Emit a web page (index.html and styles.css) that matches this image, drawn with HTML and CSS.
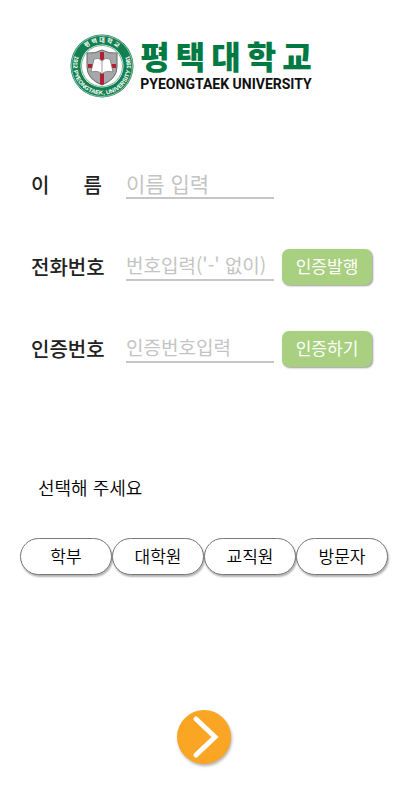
FILE: index.html
```html
<!DOCTYPE html>
<html lang="ko">

<head>
    <meta charset="utf-8">
    <meta name="viewport" content="width=device-width, initial-scale=1">
    <title>평택대학교</title>
    <link rel="stylesheet" href="styles.css">
</head>

<body>
    <header class="logo">
        <svg class="emblem" viewBox="0 0 64 64" aria-hidden="true">
            <defs>
                <path id="ring-top" d="M8 32a24 24 0 0 1 48 0" />
                <path id="ring-bottom" d="M8 16a28.800 28.800 0 1 0 48 0" />
            </defs>
            <circle cx="32" cy="32" r="31.500" fill="#128050" />
            <circle cx="32" cy="32" r="30.500" fill="none" stroke="#fff" stroke-width="0.500" />
            <circle cx="32" cy="32" r="21.500" fill="#fff" />
            <circle cx="32" cy="32" r="20.500" fill="none" stroke="#128050" stroke-width="0.600" />
            <path d="M17 19q8 1 15-3q7 4 15 3v14q0 12-15 18q-15-6-15-18z" fill="#a5a7a8" stroke="#666" stroke-width="1" />
            <path d="M30 18h4v12h12v4H34v16l-2 1l-2-1V34H18v-4h12z" fill="#ae2135" />
            <path d="M24 25q5-2 8 2q3-4 8-2l3 13q-7-2-11 2q-4-4-11-2z" fill="#fff" stroke="#777" stroke-width="0.800" />
            <path d="M32 27v13" stroke="#888" stroke-width="0.800" />
            <text class="ring-ko" text-anchor="middle"><textPath href="#ring-top" startOffset="50%">평 택 대 학 교</textPath></text>
            <text class="ring-en" text-anchor="middle"><textPath href="#ring-bottom" startOffset="50%">1912 PYEONGTAEK, UNIVERSITY 1981</textPath></text>
        </svg>
        <div class="logo-text">
            <div class="logo-ko"><span>평</span><span>택</span><span>대</span><span>학</span><span>교</span></div>
            <div class="logo-en">PYEONGTAEK UNIVERSITY</div>
        </div>
    </header>

    <form class="visit-form">
        <div class="form-group">
            <label for="name" class="spread"><span>이</span><span>름</span></label>
            <input type="text" id="name" class="name" placeholder="이름 입력">
        </div>
        <div class="form-group">
            <label for="phone">전화번호</label>
            <input type="tel" id="phone" placeholder="번호입력('-' 없이)">
            <button type="button" class="auth-btn">인증발행</button>
        </div>
        <div class="form-group">
            <label for="code">인증번호</label>
            <input type="text" id="code" placeholder="인증번호입력">
            <button type="button" class="auth-btn">인증하기</button>
        </div>

        <p class="select-text">선택해 주세요</p>
        <div class="types">
            <button type="button">학부</button>
            <button type="button">대학원</button>
            <button type="button">교직원</button>
            <button type="button">방문자</button>
        </div>

        <button type="submit" class="next-btn" aria-label="다음">
            <svg viewBox="0 0 54 54">
                <path d="M19 9l19 18l-19 18" fill="none" stroke="#fff" stroke-width="5" stroke-linecap="round" />
            </svg>
        </button>
    </form>
</body>

</html>
```
FILE: styles.css
```css
* {
    box-sizing: border-box;
}

body {
    margin: 0;
    background-color: #fff;
    color: #222;
    font-family: "Noto Sans CJK KR", "Noto Sans", sans-serif;
}

button,
input {
    font-family: inherit;
}

.logo {
    display: flex;
    justify-content: center;
    align-items: center;
    gap: 6px;
    padding-top: 34px;
    padding-right: 26px;
}

.emblem {
    width: 64px;
    height: 64px;
}

.ring-ko {
    fill: #fff;
    font-size: 6px;
    font-weight: 700;
}

.ring-en {
    fill: #fff;
    font-family: "Liberation Sans", sans-serif;
    font-size: 6px;
    font-weight: 700;
}

.logo-text {
    display: flex;
    flex-direction: column;
    padding-bottom: 4px;
}

.logo-ko {
    display: flex;
    justify-content: space-between;
    gap: 6px;
    color: #007a43;
    font-size: 32px;
    font-weight: 900;
    line-height: 40px;
}

.logo-en {
    color: #111;
    font-family: Roboto, sans-serif;
    font-size: 14px;
    font-weight: 700;
    line-height: 18px;
    white-space: nowrap;
}

.visit-form {
    display: flex;
    flex-direction: column;
    padding: 68px 20px 32px;
}

.form-group {
    display: flex;
    align-items: center;
    height: 38px;
    margin-bottom: 44px;
    padding-left: 11px;
}

.form-group label {
    width: 75px;
    margin-right: 20px;
    padding-bottom: 2px;
    font-size: 20px;
    font-weight: 500;
    white-space: nowrap;
}

.form-group .spread {
    display: flex;
    justify-content: space-between;
    padding-right: 4px;
}

.form-group input {
    width: 148px;
    height: 30px;
    margin-bottom: 3px;
    padding: 0;
    border: none;
    border-bottom: 2px solid #c6c6c6;
    background: none;
    color: #222;
    font-size: 19px;
    font-weight: 400;
    outline: none;
}

.form-group .name {
    font-size: 21px;
}

.form-group input::placeholder {
    color: #c4c4c4;
}

.auth-btn {
    width: 90px;
    height: 36px;
    margin-left: 8px;
    padding: 0 0 3px;
    border: none;
    border-radius: 7px;
    background-color: #a8d080;
    box-shadow: 1px 1px 2px rgba(0, 0, 0, 0.4);
    color: #fff;
    font-size: 17px;
    font-weight: 400;
    cursor: pointer;
}

.select-text {
    margin: 61px 18px 37px;
    color: #000;
    font-size: 18px;
    font-weight: 350;
    line-height: 28px;
}

.types {
    display: flex;
}

.types button {
    flex: 1;
    height: 37px;
    padding: 0 0 3px;
    border: 1px solid #777;
    border-radius: 19px;
    background-color: #fff;
    box-shadow: 1px 2px 2px rgba(0, 0, 0, 0.3);
    color: #000;
    font-size: 17px;
    font-weight: 350;
    cursor: pointer;
}

.next-btn {
    align-self: center;
    width: 54px;
    height: 54px;
    margin-top: 135px;
    padding: 0;
    border: none;
    border-radius: 50%;
    background-color: #faa523;
    box-shadow: 1px 2px 3px rgba(0, 0, 0, 0.3);
    cursor: pointer;
}

.next-btn svg {
    display: block;
    width: 100%;
}
```
